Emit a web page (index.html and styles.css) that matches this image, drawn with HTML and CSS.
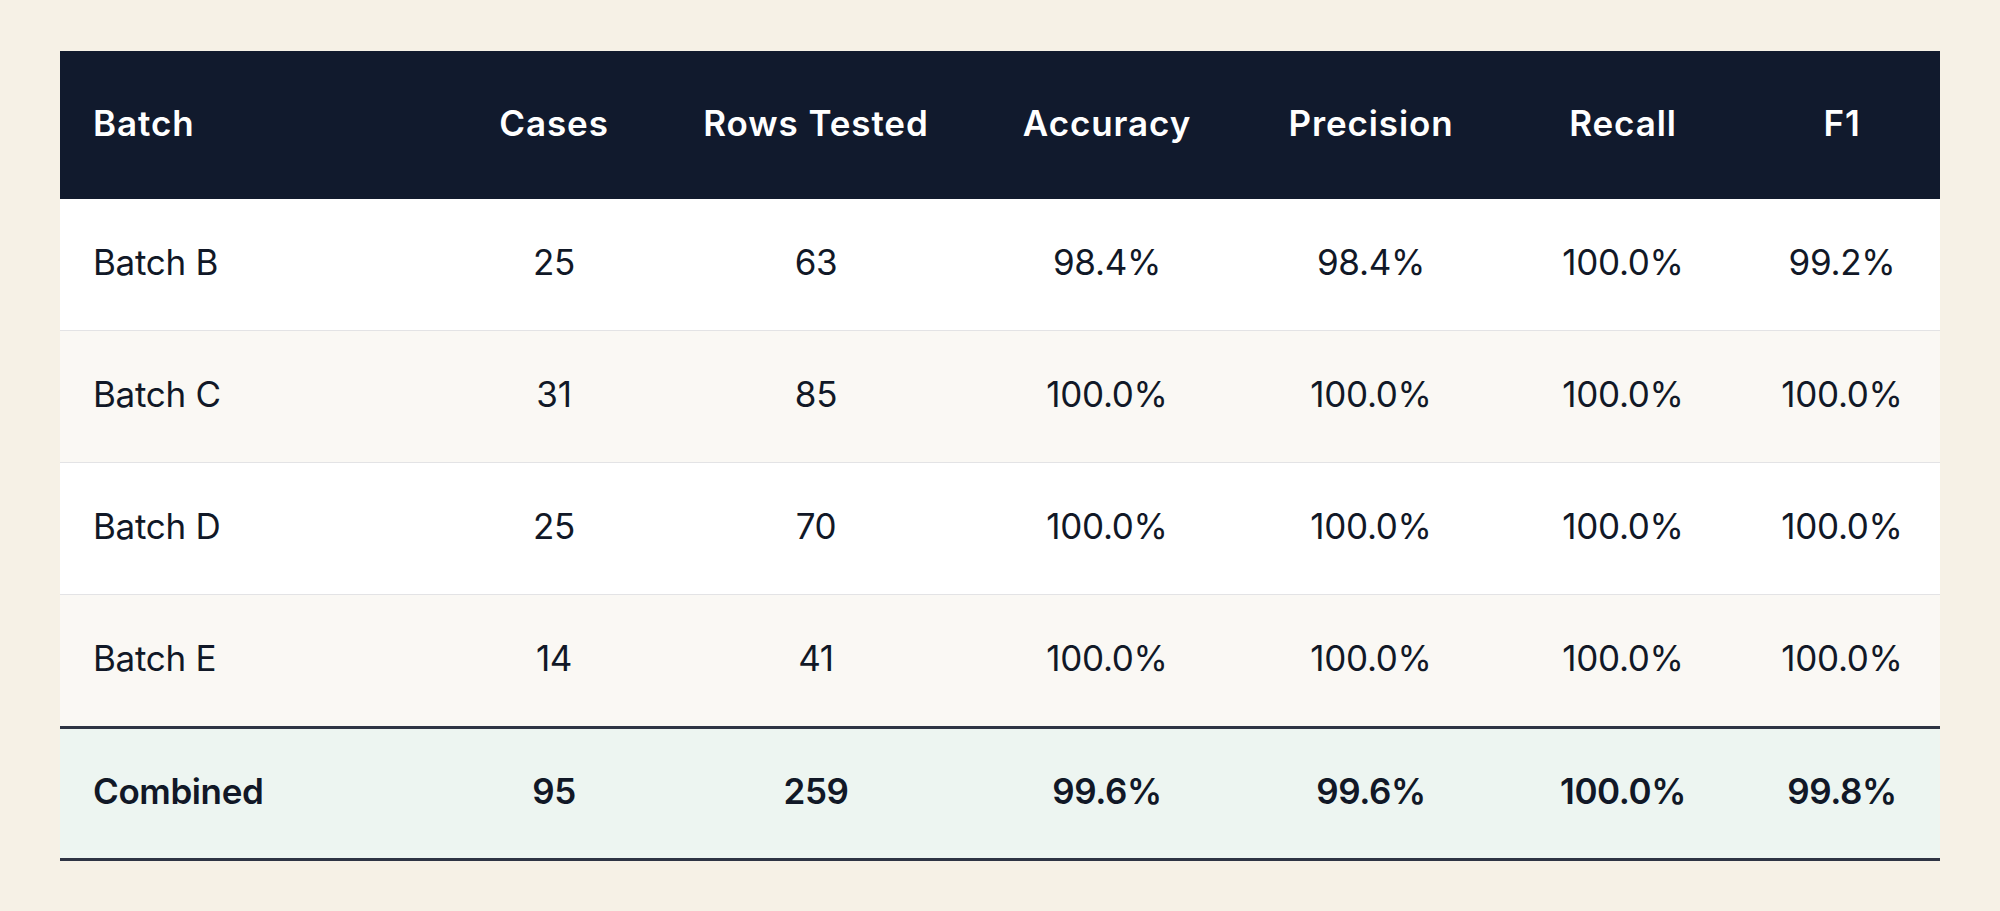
FILE: index.html
```html
<!DOCTYPE html>
<html lang="en">
<head>
<meta charset="utf-8">
<title>Batch results</title>
<link rel="stylesheet" href="styles.css">
</head>
<body>
<main class="page">
  <table class="results">
    <colgroup>
      <col class="c-batch"><col class="c-cases"><col class="c-rows"><col class="c-acc"><col class="c-prec"><col class="c-rec"><col class="c-f1">
    </colgroup>
    <thead>
      <tr>
        <th class="left">Batch</th>
        <th>Cases</th>
        <th>Rows Tested</th>
        <th>Accuracy</th>
        <th>Precision</th>
        <th>Recall</th>
        <th>F1</th>
      </tr>
    </thead>
    <tbody>
      <tr>
        <td class="left">Batch B</td><td>25</td><td>63</td><td>98.4%</td><td>98.4%</td><td>100.0%</td><td>99.2%</td>
      </tr>
      <tr>
        <td class="left">Batch C</td><td>31</td><td>85</td><td>100.0%</td><td>100.0%</td><td>100.0%</td><td>100.0%</td>
      </tr>
      <tr>
        <td class="left">Batch D</td><td>25</td><td>70</td><td>100.0%</td><td>100.0%</td><td>100.0%</td><td>100.0%</td>
      </tr>
      <tr>
        <td class="left">Batch E</td><td>14</td><td>41</td><td>100.0%</td><td>100.0%</td><td>100.0%</td><td>100.0%</td>
      </tr>
    </tbody>
    <tfoot>
      <tr>
        <td class="left">Combined</td><td>95</td><td>259</td><td>99.6%</td><td>99.6%</td><td>100.0%</td><td>99.8%</td>
      </tr>
    </tfoot>
  </table>
</main>
</body>
</html>
```

FILE: styles.css
```css
html, body {
  margin: 0;
  padding: 0;
}

body {
  background: #f6f1e6;
  font-family: Inter, "Noto Sans", "Liberation Sans", sans-serif;
  color: #111827;
}

.page {
  padding: 51px 60px;
}

.results {
  width: 1880px;
  table-layout: fixed;
  border-collapse: separate;
  border-spacing: 0;
  font-size: 35px;
}

.c-batch { width: 390px; }
.c-cases { width: 208px; }
.c-rows { width: 316px; }
.c-acc { width: 266px; }
.c-prec { width: 262px; }
.c-rec { width: 242px; }
.c-f1 { width: 196px; }

.results th,
.results td {
  text-align: center;
  padding: 0 10px 5px;
  white-space: nowrap;
  letter-spacing: -0.3px;
  box-sizing: border-box;
}

.results .left {
  text-align: left;
  padding-left: 33px;
}

.results thead th {
  background: #111a2d;
  color: #ffffff;
  font-weight: 600;
  letter-spacing: 0.9px;
  height: 148px;
  line-height: 42px;
}

.results tbody td {
  height: 132px;
  line-height: 42px;
  font-weight: 400;
  background: #ffffff;
  border-bottom: 1px solid #e3e3e5;
}

.results tbody tr:nth-child(even) td {
  background: #faf8f4;
}

.results tbody tr:last-child td {
  border-bottom: 0;
  height: 131px;
}

.results tfoot td {
  height: 135px;
  line-height: 42px;
  font-weight: 600;
  letter-spacing: -0.4px;
  background: #edf5f1;
  border-top: 3px solid #2e3444;
  border-bottom: 3px solid #2e3444;
}
```
